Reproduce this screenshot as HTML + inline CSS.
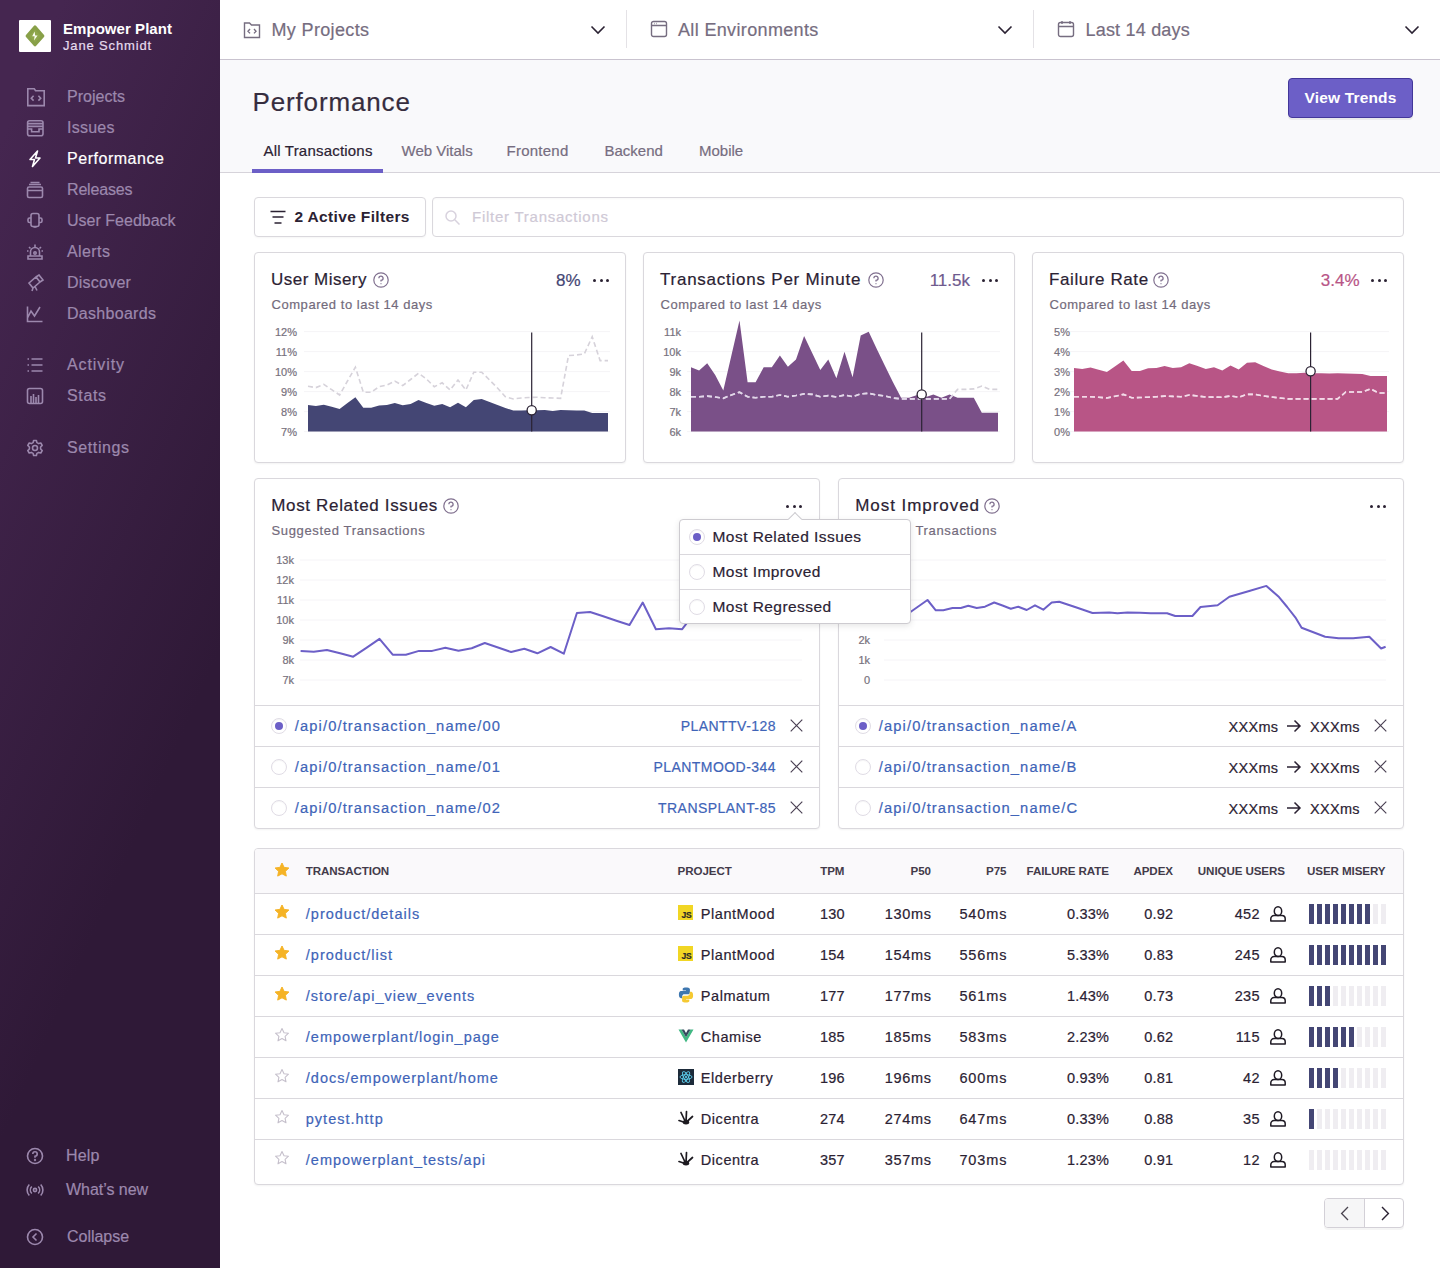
<!DOCTYPE html>
<html><head><meta charset="utf-8">
<style>
*{box-sizing:border-box;margin:0;padding:0}
html,body{width:1440px;height:1268px;overflow:hidden;background:#fff;font-family:"Liberation Sans",sans-serif;color:#2b2233}
.abs{position:absolute}
.t{position:absolute;white-space:nowrap;-webkit-text-stroke:0.2px currentColor}
#sb{position:absolute;left:0;top:0;width:220px;height:1268px;background:linear-gradient(294deg,#2f1937 35%,#452650 92%)}
.card{position:absolute;background:#fff;border:1px solid #dad8dd;border-radius:4px;box-shadow:0 1px 2px rgba(0,0,0,0.05)}
.dots{position:absolute;width:18px;height:4px}
.dots i{position:absolute;top:0;width:3px;height:3px;border-radius:50%;background:#2b2233}
</style></head><body>

<div id="sb"></div>
<div class="abs" style="left:19px;top:20px;width:32px;height:32px;background:#fff;border-radius:1px">
  <svg class="abs" style="left:0;top:0" width="32" height="32" viewBox="0 0 32 32"><path d="M16 7 L23.8 16 L16 24.8 L8.2 16 Z" fill="#8fa74c" stroke="#88a048" stroke-width="3.2" stroke-linejoin="round"/><path d="M15.6 11.6 L13.2 16.3 L15.6 16.3 L15 20.6 L18.6 15.6 L16.2 15.6 Z" fill="#fbfdf2"/></svg>
</div>
<div class="t" style="left:63px;top:20.50px;font-size:15px;line-height:15px;color:#fff;font-weight:bold;-webkit-text-stroke:0;letter-spacing:0.05px;">Empower Plant</div>
<div class="t" style="left:63px;top:38.80px;font-size:13px;line-height:13px;color:#e6dcee;letter-spacing:0.85px;">Jane Schmidt</div>
<svg class="abs" style="left:26px;top:88.0px" width="20" height="19" viewBox="0 0 20 19" fill="none" stroke="#9c88ad" stroke-width="1.6"><path d="M1.8 0.8 H8.2 L9.6 2.8 H18.2 V17.6 H1.8 Z"/><path d="M7.6 7.8 L5.3 10.2 L7.6 12.6 M12.4 7.8 L14.7 10.2 L12.4 12.6"/></svg>
<div class="t" style="left:67px;top:89.36px;font-size:16px;line-height:16px;color:#9c88ad;letter-spacing:0.03px;">Projects</div>
<svg class="abs" style="left:26px;top:118.5px" width="20" height="19" viewBox="0 0 20 19" fill="none" stroke="#9c88ad" stroke-width="1.6"><rect x="1.6" y="1.8" width="15.4" height="15" rx="2"/><path d="M1.6 4.6 H17 M1.6 7.4 H17 M1.6 10 H5.6 V12.8 H13 V10 H17"/></svg>
<div class="t" style="left:67px;top:119.86px;font-size:16px;line-height:16px;color:#9c88ad;letter-spacing:0.25px;">Issues</div>
<svg class="abs" style="left:26px;top:149.5px" width="20" height="19" viewBox="0 0 20 19" fill="none" stroke="#fff" stroke-width="1.6"><path d="M11.5 1 L4 9.5 H8.5 L6.5 16.5 L14 8 H9.5 Z" stroke-linejoin="round"/></svg>
<div class="t" style="left:67px;top:150.86px;font-size:16px;line-height:16px;color:#fff;letter-spacing:0.53px;">Performance</div>
<svg class="abs" style="left:26px;top:180.5px" width="20" height="19" viewBox="0 0 20 19" fill="none" stroke="#9c88ad" stroke-width="1.6"><rect x="1.5" y="6" width="15" height="10.5" rx="1.5"/><path d="M3 3.5 H15 M4.5 1.5 H13.5 M1.5 9.5 H16.5"/></svg>
<div class="t" style="left:67px;top:181.86px;font-size:16px;line-height:16px;color:#9c88ad;letter-spacing:-0.17px;">Releases</div>
<svg class="abs" style="left:26px;top:211.5px" width="20" height="19" viewBox="0 0 20 19" fill="none" stroke="#9c88ad" stroke-width="1.6"><rect x="5" y="1.5" width="8" height="13" rx="2"/><path d="M5 6 H3.5 A1.5 1.5 0 0 0 2 7.5 V9 A1.5 1.5 0 0 0 3.5 10.5 H5 M13 6 H14.5 A1.5 1.5 0 0 1 16 7.5 V9 A1.5 1.5 0 0 1 14.5 10.5 H13 M7.5 15 H10.5"/></svg>
<div class="t" style="left:67px;top:212.86px;font-size:16px;line-height:16px;color:#9c88ad;letter-spacing:0.01px;">User Feedback</div>
<svg class="abs" style="left:26px;top:242.5px" width="20" height="19" viewBox="0 0 20 19" fill="none" stroke="#9c88ad" stroke-width="1.6"><path d="M4.5 13 V9 A4.5 4.5 0 0 1 13.5 9 V13 M2 16 H16 V13 H2 Z M9 1.5 V4 M3 4 L4.5 5.5 M15 4 L13.5 5.5 M1 8 H2.5 M15.5 8 H17"/><circle cx="9" cy="10" r="1.2"/></svg>
<div class="t" style="left:67px;top:243.86px;font-size:16px;line-height:16px;color:#9c88ad;letter-spacing:0.4px;">Alerts</div>
<svg class="abs" style="left:26px;top:273.5px" width="20" height="19" viewBox="0 0 20 19" fill="none" stroke="#9c88ad" stroke-width="1.6"><path d="M3 9 L10 3 L14 8 L7 14 Z M10 3 L13 1 L17 6 L14 8 M7 14 L6 17 M9 12.5 L11 16.5"/></svg>
<div class="t" style="left:67px;top:274.86px;font-size:16px;line-height:16px;color:#9c88ad;letter-spacing:0.24px;">Discover</div>
<svg class="abs" style="left:26px;top:304.5px" width="20" height="19" viewBox="0 0 20 19" fill="none" stroke="#9c88ad" stroke-width="1.6"><path d="M1.5 1.5 V16.5 H16.5 M1.5 13 L5 6 L8.5 11 L14 2"/></svg>
<div class="t" style="left:67px;top:305.86px;font-size:16px;line-height:16px;color:#9c88ad;letter-spacing:0.29px;">Dashboards</div>
<svg class="abs" style="left:26px;top:356.0px" width="20" height="19" viewBox="0 0 20 19" fill="none" stroke="#9c88ad" stroke-width="1.6"><path d="M5.5 3 H16.5 M5.5 9 H16.5 M5.5 15 H16.5 M1.5 3 H3 M1.5 9 H3 M1.5 15 H3"/></svg>
<div class="t" style="left:67px;top:357.36px;font-size:16px;line-height:16px;color:#9c88ad;letter-spacing:0.9px;">Activity</div>
<svg class="abs" style="left:26px;top:387.0px" width="20" height="19" viewBox="0 0 20 19" fill="none" stroke="#9c88ad" stroke-width="1.6"><rect x="1.5" y="1.5" width="15" height="15" rx="2"/><path d="M5 16 V9 M7.5 16 V7 M10 16 V10 M12.5 16 V8"/></svg>
<div class="t" style="left:67px;top:388.36px;font-size:16px;line-height:16px;color:#9c88ad;letter-spacing:0.63px;">Stats</div>
<svg class="abs" style="left:26px;top:439.0px" width="20" height="19" viewBox="0 0 20 19" fill="none" stroke="#9c88ad" stroke-width="1.6"><circle cx="9" cy="9" r="2.5"/><path d="M7.6 1.5 H10.4 L10.9 3.6 L12.7 4.6 L14.8 4 L16.2 6.4 L14.6 8 V10 L16.2 11.6 L14.8 14 L12.7 13.4 L10.9 14.4 L10.4 16.5 H7.6 L7.1 14.4 L5.3 13.4 L3.2 14 L1.8 11.6 L3.4 10 V8 L1.8 6.4 L3.2 4 L5.3 4.6 L7.1 3.6 Z" stroke-linejoin="round"/></svg>
<div class="t" style="left:67px;top:440.36px;font-size:16px;line-height:16px;color:#9c88ad;letter-spacing:0.61px;">Settings</div>
<svg class="abs" style="left:26px;top:1147.0px" width="20" height="19" viewBox="0 0 20 19" fill="none" stroke="#9c88ad" stroke-width="1.6"><circle cx="9" cy="9" r="7.5"/><path d="M6.8 7 A2.2 2.2 0 1 1 9 9.2 V10.8"/><circle cx="9" cy="13" r="0.4"/></svg>
<div class="t" style="left:66px;top:1148.36px;font-size:16px;line-height:16px;color:#9c88ad;letter-spacing:0.16px;">Help</div>
<svg class="abs" style="left:26px;top:1181.0px" width="20" height="19" viewBox="0 0 20 19" fill="none" stroke="#9c88ad" stroke-width="1.6"><circle cx="9" cy="9" r="1.6"/><path d="M5.8 5.5 A5 5 0 0 0 5.8 12.5 M12.2 5.5 A5 5 0 0 1 12.2 12.5 M3.3 3.5 A8 8 0 0 0 3.3 14.5 M14.7 3.5 A8 8 0 0 1 14.7 14.5"/></svg>
<div class="t" style="left:66px;top:1182.36px;font-size:16px;line-height:16px;color:#9c88ad;letter-spacing:-0.03px;">What’s new</div>
<svg class="abs" style="left:26px;top:1228.0px" width="20" height="19" viewBox="0 0 20 19" fill="none" stroke="#9c88ad" stroke-width="1.6"><circle cx="9" cy="9" r="7.5"/><path d="M10.5 5.5 L7 9 L10.5 12.5"/></svg>
<div class="t" style="left:67px;top:1229.36px;font-size:16px;line-height:16px;color:#9c88ad;letter-spacing:-0.02px;">Collapse</div>
<div class="abs" style="left:220px;top:0;width:1220px;height:60px;background:#fff;border-bottom:1px solid #c9c3cf"></div>
<svg class="abs" style="left:243px;top:21px" width="18" height="18" viewBox="0 0 18 18" fill="none" stroke="#766d80" stroke-width="1.4"><path d="M1.5 2 H6.5 L8.5 4 H16.5 V16.5 H1.5 Z"/><path d="M7 8 L5 10.2 L7 12.4 M11 8 L13 10.2 L11 12.4"/></svg>
<div class="t" style="left:271.5px;top:20.66px;font-size:18px;line-height:18px;color:#766d80;letter-spacing:0.35px;">My Projects</div>
<svg class="abs" style="left:650px;top:20px" width="18" height="18" viewBox="0 0 18 18" fill="none" stroke="#766d80" stroke-width="1.4"><rect x="1.5" y="1.5" width="15" height="15" rx="2"/><path d="M1.5 5.5 H16.5 M4 3.5 H4.5 M6 3.5 H6.5"/></svg>
<div class="t" style="left:678px;top:20.66px;font-size:18px;line-height:18px;color:#766d80;letter-spacing:0.35px;">All Environments</div>
<svg class="abs" style="left:1057px;top:20px" width="18" height="18" viewBox="0 0 18 18" fill="none" stroke="#766d80" stroke-width="1.4"><rect x="1.5" y="2.5" width="15" height="14" rx="2"/><path d="M1.5 6.5 H16.5 M5 1 V4 M13 1 V4"/></svg>
<div class="t" style="left:1085.5px;top:20.66px;font-size:18px;line-height:18px;color:#766d80;letter-spacing:0.2px;">Last 14 days</div>
<svg class="abs" style="left:590px;top:22px" width="16" height="16" viewBox="0 0 16 16" fill="none" stroke="#2b2233" stroke-width="1.6"><path d="M1.5 4.5 L8 11 L14.5 4.5"/></svg>
<svg class="abs" style="left:997px;top:22px" width="16" height="16" viewBox="0 0 16 16" fill="none" stroke="#2b2233" stroke-width="1.6"><path d="M1.5 4.5 L8 11 L14.5 4.5"/></svg>
<svg class="abs" style="left:1404px;top:22px" width="16" height="16" viewBox="0 0 16 16" fill="none" stroke="#2b2233" stroke-width="1.6"><path d="M1.5 4.5 L8 11 L14.5 4.5"/></svg>
<div class="abs" style="left:626px;top:10px;width:1px;height:38px;background:#e4e2e6"></div>
<div class="abs" style="left:1033px;top:10px;width:1px;height:38px;background:#e4e2e6"></div>
<div class="abs" style="left:220px;top:60px;width:1220px;height:113px;background:#f9f9fb;border-bottom:1px solid #d6d3da"></div>
<div class="t" style="left:252.5px;top:88.59px;font-size:26px;line-height:26px;color:#362d3e;letter-spacing:0.85px;">Performance</div>
<div class="abs" style="left:1288px;top:78px;width:125px;height:40px;background:#6c5fc7;border:1px solid #43379a;border-radius:4px;box-shadow:0 2px 0 rgba(0,0,0,0.06)"></div>
<div class="t" style="left:1304.5px;top:90.08px;font-size:15.5px;line-height:15.5px;color:#fff;font-weight:bold;-webkit-text-stroke:0;letter-spacing:0.17px;">View Trends</div>
<div class="t" style="left:263.5px;top:142.90px;font-size:15px;line-height:15px;color:#2b2233;letter-spacing:0.2px;">All Transactions</div>
<div class="t" style="left:401.5px;top:142.90px;font-size:15px;line-height:15px;color:#766d80;letter-spacing:0.0px;">Web Vitals</div>
<div class="t" style="left:506.5px;top:142.90px;font-size:15px;line-height:15px;color:#766d80;letter-spacing:0.25px;">Frontend</div>
<div class="t" style="left:604.5px;top:142.90px;font-size:15px;line-height:15px;color:#766d80;letter-spacing:0.0px;">Backend</div>
<div class="t" style="left:699px;top:142.90px;font-size:15px;line-height:15px;color:#766d80;letter-spacing:0.0px;">Mobile</div>
<div class="abs" style="left:252px;top:169px;width:131px;height:4px;background:#6c5fc7"></div>
<div class="abs" style="left:254px;top:197px;width:172px;height:40px;border:1px solid #dad8dd;border-radius:4px;background:#fff;box-shadow:0 1px 2px rgba(0,0,0,0.04)"></div>
<svg class="abs" style="left:270px;top:209.5px" width="16" height="15" viewBox="0 0 16 15" fill="none" stroke="#2b2233" stroke-width="1.5"><path d="M0.5 1.5 H15.5 M2.5 7 H13.5 M4.5 13 H11.5"/></svg>
<div class="t" style="left:294.5px;top:208.58px;font-size:15.5px;line-height:15.5px;color:#2b2233;font-weight:bold;-webkit-text-stroke:0;letter-spacing:0.35px;">2 Active Filters</div>
<div class="abs" style="left:432px;top:197px;width:972px;height:40px;border:1px solid #dad8dd;border-radius:4px;background:#fff;box-shadow:inset 0 1px 2px rgba(0,0,0,0.03)"></div>
<svg class="abs" style="left:445px;top:210px" width="16" height="15" viewBox="0 0 16 15" fill="none" stroke="#d8d2de" stroke-width="1.5"><circle cx="6" cy="6" r="5"/><path d="M9.8 9.8 L14.5 14.5"/></svg>
<div class="t" style="left:472px;top:209.30px;font-size:15px;line-height:15px;color:#cfc9d6;letter-spacing:0.75px;">Filter Transactions</div>
<div class="card" style="left:254px;top:252px;width:372px;height:211px"></div>
<div class="t" style="left:271px;top:271.21px;font-size:17px;line-height:17px;color:#2b2233;letter-spacing:0.48px;">User Misery</div>
<svg class="abs" style="left:373px;top:272px" width="16" height="16" viewBox="0 0 16 16" fill="none" stroke="#80708f" stroke-width="1.2"><circle cx="8" cy="8" r="7.2"/><path d="M5.9 6.3 A2.1 2.1 0 1 1 8 8.4 V9.6" stroke-width="1.3"/><circle cx="8" cy="11.7" r="0.6" fill="#80708f" stroke="none"/></svg>
<div class="t" style="right:859.50px;top:271.61px;font-size:17px;line-height:17px;color:#444674;letter-spacing:0px;">8%</div>
<div class="dots" style="left:593px;top:278.5px"><i style="left:0"></i><i style="left:6.7px"></i><i style="left:13.4px"></i></div>
<div class="t" style="left:271.5px;top:298.40px;font-size:13px;line-height:13px;color:#736b7c;letter-spacing:0.55px;">Compared to last 14 days</div>
<div class="t" style="right:1143.00px;top:326.89px;font-size:11px;line-height:11px;color:#77717d;letter-spacing:0px;">12%</div>
<div class="t" style="right:1143.00px;top:346.89px;font-size:11px;line-height:11px;color:#77717d;letter-spacing:0px;">11%</div>
<div class="t" style="right:1143.00px;top:366.89px;font-size:11px;line-height:11px;color:#77717d;letter-spacing:0px;">10%</div>
<div class="t" style="right:1143.00px;top:386.89px;font-size:11px;line-height:11px;color:#77717d;letter-spacing:0px;">9%</div>
<div class="t" style="right:1143.00px;top:406.89px;font-size:11px;line-height:11px;color:#77717d;letter-spacing:0px;">8%</div>
<div class="t" style="right:1143.00px;top:426.89px;font-size:11px;line-height:11px;color:#77717d;letter-spacing:0px;">7%</div>
<div class="card" style="left:643px;top:252px;width:372px;height:211px"></div>
<div class="t" style="left:660px;top:271.21px;font-size:17px;line-height:17px;color:#2b2233;letter-spacing:0.76px;">Transactions Per Minute</div>
<svg class="abs" style="left:868px;top:272px" width="16" height="16" viewBox="0 0 16 16" fill="none" stroke="#80708f" stroke-width="1.2"><circle cx="8" cy="8" r="7.2"/><path d="M5.9 6.3 A2.1 2.1 0 1 1 8 8.4 V9.6" stroke-width="1.3"/><circle cx="8" cy="11.7" r="0.6" fill="#80708f" stroke="none"/></svg>
<div class="t" style="right:470.00px;top:271.61px;font-size:17px;line-height:17px;color:#6e5a8e;letter-spacing:0px;">11.5k</div>
<div class="dots" style="left:982px;top:278.5px"><i style="left:0"></i><i style="left:6.7px"></i><i style="left:13.4px"></i></div>
<div class="t" style="left:660.5px;top:298.40px;font-size:13px;line-height:13px;color:#736b7c;letter-spacing:0.55px;">Compared to last 14 days</div>
<div class="t" style="right:759.00px;top:326.89px;font-size:11px;line-height:11px;color:#77717d;letter-spacing:0px;">11k</div>
<div class="t" style="right:759.00px;top:346.89px;font-size:11px;line-height:11px;color:#77717d;letter-spacing:0px;">10k</div>
<div class="t" style="right:759.00px;top:366.89px;font-size:11px;line-height:11px;color:#77717d;letter-spacing:0px;">9k</div>
<div class="t" style="right:759.00px;top:386.89px;font-size:11px;line-height:11px;color:#77717d;letter-spacing:0px;">8k</div>
<div class="t" style="right:759.00px;top:406.89px;font-size:11px;line-height:11px;color:#77717d;letter-spacing:0px;">7k</div>
<div class="t" style="right:759.00px;top:426.89px;font-size:11px;line-height:11px;color:#77717d;letter-spacing:0px;">6k</div>
<div class="card" style="left:1032px;top:252px;width:372px;height:211px"></div>
<div class="t" style="left:1049px;top:271.21px;font-size:17px;line-height:17px;color:#2b2233;letter-spacing:0.59px;">Failure Rate</div>
<svg class="abs" style="left:1153px;top:272px" width="16" height="16" viewBox="0 0 16 16" fill="none" stroke="#80708f" stroke-width="1.2"><circle cx="8" cy="8" r="7.2"/><path d="M5.9 6.3 A2.1 2.1 0 1 1 8 8.4 V9.6" stroke-width="1.3"/><circle cx="8" cy="11.7" r="0.6" fill="#80708f" stroke="none"/></svg>
<div class="t" style="right:80.50px;top:271.61px;font-size:17px;line-height:17px;color:#b85586;letter-spacing:0px;">3.4%</div>
<div class="dots" style="left:1371px;top:278.5px"><i style="left:0"></i><i style="left:6.7px"></i><i style="left:13.4px"></i></div>
<div class="t" style="left:1049.5px;top:298.40px;font-size:13px;line-height:13px;color:#736b7c;letter-spacing:0.55px;">Compared to last 14 days</div>
<div class="t" style="right:370.00px;top:326.89px;font-size:11px;line-height:11px;color:#77717d;letter-spacing:0px;">5%</div>
<div class="t" style="right:370.00px;top:346.89px;font-size:11px;line-height:11px;color:#77717d;letter-spacing:0px;">4%</div>
<div class="t" style="right:370.00px;top:366.89px;font-size:11px;line-height:11px;color:#77717d;letter-spacing:0px;">3%</div>
<div class="t" style="right:370.00px;top:386.89px;font-size:11px;line-height:11px;color:#77717d;letter-spacing:0px;">2%</div>
<div class="t" style="right:370.00px;top:406.89px;font-size:11px;line-height:11px;color:#77717d;letter-spacing:0px;">1%</div>
<div class="t" style="right:370.00px;top:426.89px;font-size:11px;line-height:11px;color:#77717d;letter-spacing:0px;">0%</div>
<div class="card" style="left:254px;top:478px;width:566px;height:351px"></div>
<div class="t" style="left:271.2px;top:497.41px;font-size:17px;line-height:17px;color:#2b2233;letter-spacing:0.67px;">Most Related Issues</div>
<svg class="abs" style="left:443px;top:498px" width="16" height="16" viewBox="0 0 16 16" fill="none" stroke="#80708f" stroke-width="1.2"><circle cx="8" cy="8" r="7.2"/><path d="M5.9 6.3 A2.1 2.1 0 1 1 8 8.4 V9.6" stroke-width="1.3"/><circle cx="8" cy="11.7" r="0.6" fill="#80708f" stroke="none"/></svg>
<div class="dots" style="left:786px;top:504.5px"><i style="left:0"></i><i style="left:6.7px"></i><i style="left:13.4px"></i></div>
<div class="t" style="left:271.5px;top:523.70px;font-size:13px;line-height:13px;color:#736b7c;letter-spacing:0.65px;">Suggested Transactions</div>
<div class="t" style="right:1146.00px;top:555.29px;font-size:11px;line-height:11px;color:#77717d;letter-spacing:0px;">13k</div>
<div class="t" style="right:1146.00px;top:575.29px;font-size:11px;line-height:11px;color:#77717d;letter-spacing:0px;">12k</div>
<div class="t" style="right:1146.00px;top:595.29px;font-size:11px;line-height:11px;color:#77717d;letter-spacing:0px;">11k</div>
<div class="t" style="right:1146.00px;top:615.29px;font-size:11px;line-height:11px;color:#77717d;letter-spacing:0px;">10k</div>
<div class="t" style="right:1146.00px;top:635.29px;font-size:11px;line-height:11px;color:#77717d;letter-spacing:0px;">9k</div>
<div class="t" style="right:1146.00px;top:655.29px;font-size:11px;line-height:11px;color:#77717d;letter-spacing:0px;">8k</div>
<div class="t" style="right:1146.00px;top:675.29px;font-size:11px;line-height:11px;color:#77717d;letter-spacing:0px;">7k</div>
<div class="abs" style="left:254px;top:705.0px;width:566px;height:1px;background:#dad8dd"></div>
<div class="abs" style="left:271px;top:717.5px;width:16px;height:16px;border-radius:50%;border:1px solid #e0dce5;background:#fff;box-shadow:inset 0 1px 1px rgba(0,0,0,0.04)"><div class="abs" style="left:3px;top:3px;width:8px;height:8px;border-radius:50%;background:#6c5fc7"></div></div>
<div class="t" style="left:294.8px;top:718.86px;font-size:14.7px;line-height:14.7px;color:#4064b8;letter-spacing:1.12px;">/api/0/transaction_name/00</div>
<div class="t" style="right:664.05px;top:718.95px;font-size:14px;line-height:14px;color:#4064b8;letter-spacing:0.45px;">PLANTTV-128</div>
<svg class="abs" style="left:790px;top:718.5px" width="13" height="13" viewBox="0 0 13 13" fill="none" stroke="#4a4053" stroke-width="1.15"><path d="M0.7 0.7 L12.3 12.3 M12.3 0.7 L0.7 12.3"/></svg>
<div class="abs" style="left:254px;top:746.0px;width:566px;height:1px;background:#dad8dd"></div>
<div class="abs" style="left:271px;top:758.5px;width:16px;height:16px;border-radius:50%;border:1px solid #e0dce5;background:#fff;box-shadow:inset 0 1px 1px rgba(0,0,0,0.04)"></div>
<div class="t" style="left:294.8px;top:759.86px;font-size:14.7px;line-height:14.7px;color:#4064b8;letter-spacing:1.12px;">/api/0/transaction_name/01</div>
<div class="t" style="right:664.05px;top:759.95px;font-size:14px;line-height:14px;color:#4064b8;letter-spacing:0.45px;">PLANTMOOD-344</div>
<svg class="abs" style="left:790px;top:759.5px" width="13" height="13" viewBox="0 0 13 13" fill="none" stroke="#4a4053" stroke-width="1.15"><path d="M0.7 0.7 L12.3 12.3 M12.3 0.7 L0.7 12.3"/></svg>
<div class="abs" style="left:254px;top:787.0px;width:566px;height:1px;background:#dad8dd"></div>
<div class="abs" style="left:271px;top:799.5px;width:16px;height:16px;border-radius:50%;border:1px solid #e0dce5;background:#fff;box-shadow:inset 0 1px 1px rgba(0,0,0,0.04)"></div>
<div class="t" style="left:294.8px;top:800.86px;font-size:14.7px;line-height:14.7px;color:#4064b8;letter-spacing:1.12px;">/api/0/transaction_name/02</div>
<div class="t" style="right:664.05px;top:800.95px;font-size:14px;line-height:14px;color:#4064b8;letter-spacing:0.45px;">TRANSPLANT-85</div>
<svg class="abs" style="left:790px;top:800.5px" width="13" height="13" viewBox="0 0 13 13" fill="none" stroke="#4a4053" stroke-width="1.15"><path d="M0.7 0.7 L12.3 12.3 M12.3 0.7 L0.7 12.3"/></svg>
<div class="card" style="left:838px;top:478px;width:566px;height:351px"></div>
<div class="t" style="left:855.2px;top:497.41px;font-size:17px;line-height:17px;color:#2b2233;letter-spacing:0.95px;">Most Improved</div>
<svg class="abs" style="left:984px;top:498px" width="16" height="16" viewBox="0 0 16 16" fill="none" stroke="#80708f" stroke-width="1.2"><circle cx="8" cy="8" r="7.2"/><path d="M5.9 6.3 A2.1 2.1 0 1 1 8 8.4 V9.6" stroke-width="1.3"/><circle cx="8" cy="11.7" r="0.6" fill="#80708f" stroke="none"/></svg>
<div class="dots" style="left:1370px;top:504.5px"><i style="left:0"></i><i style="left:6.7px"></i><i style="left:13.4px"></i></div>
<div class="t" style="left:915.5px;top:523.70px;font-size:13px;line-height:13px;color:#736b7c;letter-spacing:0.65px;">Transactions</div>
<div class="t" style="right:570.00px;top:555.29px;font-size:11px;line-height:11px;color:#77717d;letter-spacing:0px;">6k</div>
<div class="t" style="right:570.00px;top:575.29px;font-size:11px;line-height:11px;color:#77717d;letter-spacing:0px;">5k</div>
<div class="t" style="right:570.00px;top:595.29px;font-size:11px;line-height:11px;color:#77717d;letter-spacing:0px;">4k</div>
<div class="t" style="right:570.00px;top:615.29px;font-size:11px;line-height:11px;color:#77717d;letter-spacing:0px;">3k</div>
<div class="t" style="right:570.00px;top:635.29px;font-size:11px;line-height:11px;color:#77717d;letter-spacing:0px;">2k</div>
<div class="t" style="right:570.00px;top:655.29px;font-size:11px;line-height:11px;color:#77717d;letter-spacing:0px;">1k</div>
<div class="t" style="right:570.00px;top:675.29px;font-size:11px;line-height:11px;color:#77717d;letter-spacing:0px;">0</div>
<div class="abs" style="left:838px;top:705.0px;width:566px;height:1px;background:#dad8dd"></div>
<div class="abs" style="left:855px;top:717.5px;width:16px;height:16px;border-radius:50%;border:1px solid #e0dce5;background:#fff;box-shadow:inset 0 1px 1px rgba(0,0,0,0.04)"><div class="abs" style="left:3px;top:3px;width:8px;height:8px;border-radius:50%;background:#6c5fc7"></div></div>
<div class="t" style="left:878.8px;top:718.86px;font-size:14.7px;line-height:14.7px;color:#4064b8;letter-spacing:1.12px;">/api/0/transaction_name/A</div>
<div class="t" style="right:80.20px;top:719.23px;font-size:14.5px;line-height:14.5px;color:#2b2233;letter-spacing:0.3px;">XXXms <svg width="16" height="14" viewBox="0 0 16 14" style="margin:0 4px 0 3px;vertical-align:-1px" fill="none" stroke="#2b2233" stroke-width="1.5"><path d="M1 7 H14 M8.5 1.5 L14 7 L8.5 12.5"/></svg> XXXms</div>
<svg class="abs" style="left:1374px;top:718.5px" width="13" height="13" viewBox="0 0 13 13" fill="none" stroke="#4a4053" stroke-width="1.15"><path d="M0.7 0.7 L12.3 12.3 M12.3 0.7 L0.7 12.3"/></svg>
<div class="abs" style="left:838px;top:746.0px;width:566px;height:1px;background:#dad8dd"></div>
<div class="abs" style="left:855px;top:758.5px;width:16px;height:16px;border-radius:50%;border:1px solid #e0dce5;background:#fff;box-shadow:inset 0 1px 1px rgba(0,0,0,0.04)"></div>
<div class="t" style="left:878.8px;top:759.86px;font-size:14.7px;line-height:14.7px;color:#4064b8;letter-spacing:1.12px;">/api/0/transaction_name/B</div>
<div class="t" style="right:80.20px;top:760.23px;font-size:14.5px;line-height:14.5px;color:#2b2233;letter-spacing:0.3px;">XXXms <svg width="16" height="14" viewBox="0 0 16 14" style="margin:0 4px 0 3px;vertical-align:-1px" fill="none" stroke="#2b2233" stroke-width="1.5"><path d="M1 7 H14 M8.5 1.5 L14 7 L8.5 12.5"/></svg> XXXms</div>
<svg class="abs" style="left:1374px;top:759.5px" width="13" height="13" viewBox="0 0 13 13" fill="none" stroke="#4a4053" stroke-width="1.15"><path d="M0.7 0.7 L12.3 12.3 M12.3 0.7 L0.7 12.3"/></svg>
<div class="abs" style="left:838px;top:787.0px;width:566px;height:1px;background:#dad8dd"></div>
<div class="abs" style="left:855px;top:799.5px;width:16px;height:16px;border-radius:50%;border:1px solid #e0dce5;background:#fff;box-shadow:inset 0 1px 1px rgba(0,0,0,0.04)"></div>
<div class="t" style="left:878.8px;top:800.86px;font-size:14.7px;line-height:14.7px;color:#4064b8;letter-spacing:1.12px;">/api/0/transaction_name/C</div>
<div class="t" style="right:80.20px;top:801.23px;font-size:14.5px;line-height:14.5px;color:#2b2233;letter-spacing:0.3px;">XXXms <svg width="16" height="14" viewBox="0 0 16 14" style="margin:0 4px 0 3px;vertical-align:-1px" fill="none" stroke="#2b2233" stroke-width="1.5"><path d="M1 7 H14 M8.5 1.5 L14 7 L8.5 12.5"/></svg> XXXms</div>
<svg class="abs" style="left:1374px;top:800.5px" width="13" height="13" viewBox="0 0 13 13" fill="none" stroke="#4a4053" stroke-width="1.15"><path d="M0.7 0.7 L12.3 12.3 M12.3 0.7 L0.7 12.3"/></svg>
<svg class="abs" style="left:0;top:0" width="1440" height="1268" viewBox="0 0 1440 1268"><line x1="304" y1="331.6" x2="610" y2="331.6" stroke="#f5f4f7" stroke-width="1"/>
<line x1="304" y1="351.6" x2="610" y2="351.6" stroke="#f5f4f7" stroke-width="1"/>
<line x1="304" y1="371.6" x2="610" y2="371.6" stroke="#f5f4f7" stroke-width="1"/>
<line x1="304" y1="391.6" x2="610" y2="391.6" stroke="#f5f4f7" stroke-width="1"/>
<line x1="304" y1="411.6" x2="610" y2="411.6" stroke="#f5f4f7" stroke-width="1"/>
<line x1="304" y1="431.6" x2="610" y2="431.6" stroke="#f5f4f7" stroke-width="1"/>
<polygon points="308.0,431.6 308.0,405.0 315.9,406.0 323.8,404.7 331.7,406.8 339.6,408.9 347.5,403.0 355.4,397.2 363.3,407.8 371.2,407.8 379.1,405.5 386.9,405.0 394.8,403.0 402.7,405.3 410.6,403.9 418.5,400.0 426.4,403.0 434.3,405.8 442.2,403.9 450.1,407.2 458.0,402.8 465.9,407.2 473.8,400.0 481.7,399.1 489.6,402.0 497.5,405.0 505.4,408.0 513.3,410.6 521.2,410.6 529.1,410.3 536.9,410.2 544.8,410.0 552.7,410.9 560.6,410.0 568.5,410.2 576.4,410.4 584.3,410.6 592.2,413.0 600.1,413.0 608.0,413.0 608.0,431.6" fill="#444674"/>
<clipPath id="clip308"><polygon points="308.0,431.6 308.0,405.0 315.9,406.0 323.8,404.7 331.7,406.8 339.6,408.9 347.5,403.0 355.4,397.2 363.3,407.8 371.2,407.8 379.1,405.5 386.9,405.0 394.8,403.0 402.7,405.3 410.6,403.9 418.5,400.0 426.4,403.0 434.3,405.8 442.2,403.9 450.1,407.2 458.0,402.8 465.9,407.2 473.8,400.0 481.7,399.1 489.6,402.0 497.5,405.0 505.4,408.0 513.3,410.6 521.2,410.6 529.1,410.3 536.9,410.2 544.8,410.0 552.7,410.9 560.6,410.0 568.5,410.2 576.4,410.4 584.3,410.6 592.2,413.0 600.1,413.0 608.0,413.0 608.0,431.6"/></clipPath>
<polyline points="308.0,386.3 315.9,387.6 323.8,384.4 331.7,389.7 339.6,395.0 347.5,381.0 355.4,367.2 363.3,392.2 371.2,392.2 379.1,386.7 386.9,385.0 394.8,381.1 402.7,385.6 410.6,379.5 418.5,373.3 426.4,378.9 434.3,386.7 442.2,382.8 450.1,390.0 458.0,380.0 465.9,390.0 473.8,372.2 481.7,372.2 489.6,380.0 497.5,388.0 505.4,396.7 513.3,398.9 521.2,398.0 529.1,397.5 536.9,397.2 544.8,397.8 552.7,398.0 560.6,398.3 568.5,355.6 576.4,355.0 584.3,353.9 592.2,336.7 600.1,360.6 608.0,360.6" fill="none" stroke="#d6d2da" stroke-width="1.6" stroke-dasharray="5,3"/>
<polyline points="308.0,386.3 315.9,387.6 323.8,384.4 331.7,389.7 339.6,395.0 347.5,381.0 355.4,367.2 363.3,392.2 371.2,392.2 379.1,386.7 386.9,385.0 394.8,381.1 402.7,385.6 410.6,379.5 418.5,373.3 426.4,378.9 434.3,386.7 442.2,382.8 450.1,390.0 458.0,380.0 465.9,390.0 473.8,372.2 481.7,372.2 489.6,380.0 497.5,388.0 505.4,396.7 513.3,398.9 521.2,398.0 529.1,397.5 536.9,397.2 544.8,397.8 552.7,398.0 560.6,398.3 568.5,355.6 576.4,355.0 584.3,353.9 592.2,336.7 600.1,360.6 608.0,360.6" fill="none" stroke="#d9d5dd" stroke-width="1.6" stroke-dasharray="5,3" clip-path="url(#clip308)"/>
<line x1="531.7" y1="332.6" x2="531.7" y2="431.6" stroke="#2b2233" stroke-width="1.2"/>
<circle cx="531.7" cy="410.3" r="4.6" fill="#fff" stroke="#2b2233" stroke-width="1.3"/>
<line x1="687" y1="331.6" x2="1000" y2="331.6" stroke="#f5f4f7" stroke-width="1"/>
<line x1="687" y1="351.6" x2="1000" y2="351.6" stroke="#f5f4f7" stroke-width="1"/>
<line x1="687" y1="371.6" x2="1000" y2="371.6" stroke="#f5f4f7" stroke-width="1"/>
<line x1="687" y1="391.6" x2="1000" y2="391.6" stroke="#f5f4f7" stroke-width="1"/>
<line x1="687" y1="411.6" x2="1000" y2="411.6" stroke="#f5f4f7" stroke-width="1"/>
<line x1="687" y1="431.6" x2="1000" y2="431.6" stroke="#f5f4f7" stroke-width="1"/>
<polygon points="691.0,431.6 691.0,367.2 699.1,370.6 707.2,363.3 715.2,375.0 723.3,390.6 731.4,355.6 739.5,320.6 747.6,382.2 755.6,382.2 763.7,367.2 771.8,367.2 779.9,355.6 787.9,366.7 796.0,359.4 804.1,336.1 812.2,353.0 820.3,370.0 828.3,359.4 836.4,378.3 844.5,351.7 852.6,377.2 860.7,335.6 868.7,331.7 876.8,349.1 884.9,365.7 893.0,382.3 901.1,397.8 909.1,397.8 917.2,395.0 925.3,397.2 933.4,394.4 941.4,397.8 949.5,394.4 957.6,397.8 965.7,397.8 973.8,397.8 981.8,412.8 989.9,412.8 998.0,412.8 998.0,431.6" fill="#7a5088"/>
<clipPath id="clip691"><polygon points="691.0,431.6 691.0,367.2 699.1,370.6 707.2,363.3 715.2,375.0 723.3,390.6 731.4,355.6 739.5,320.6 747.6,382.2 755.6,382.2 763.7,367.2 771.8,367.2 779.9,355.6 787.9,366.7 796.0,359.4 804.1,336.1 812.2,353.0 820.3,370.0 828.3,359.4 836.4,378.3 844.5,351.7 852.6,377.2 860.7,335.6 868.7,331.7 876.8,349.1 884.9,365.7 893.0,382.3 901.1,397.8 909.1,397.8 917.2,395.0 925.3,397.2 933.4,394.4 941.4,397.8 949.5,394.4 957.6,397.8 965.7,397.8 973.8,397.8 981.8,412.8 989.9,412.8 998.0,412.8 998.0,431.6"/></clipPath>
<polyline points="691.0,396.7 699.1,396.7 707.2,396.1 715.2,397.0 723.3,398.3 731.4,395.0 739.5,392.2 747.6,396.7 755.6,397.8 763.7,396.7 771.8,396.7 779.9,395.0 787.9,396.7 796.0,395.5 804.1,393.9 812.2,394.4 820.3,396.7 828.3,395.6 836.4,397.0 844.5,395.0 852.6,396.7 860.7,393.9 868.7,393.3 876.8,395.0 884.9,396.0 893.0,398.0 901.1,398.9 909.1,398.9 917.2,398.9 925.3,398.9 933.4,398.9 941.4,398.9 949.5,398.9 957.6,389.4 965.7,389.4 973.8,388.9 981.8,386.1 989.9,389.4 998.0,389.4" fill="none" stroke="#d6d2da" stroke-width="1.6" stroke-dasharray="5,3"/>
<polyline points="691.0,396.7 699.1,396.7 707.2,396.1 715.2,397.0 723.3,398.3 731.4,395.0 739.5,392.2 747.6,396.7 755.6,397.8 763.7,396.7 771.8,396.7 779.9,395.0 787.9,396.7 796.0,395.5 804.1,393.9 812.2,394.4 820.3,396.7 828.3,395.6 836.4,397.0 844.5,395.0 852.6,396.7 860.7,393.9 868.7,393.3 876.8,395.0 884.9,396.0 893.0,398.0 901.1,398.9 909.1,398.9 917.2,398.9 925.3,398.9 933.4,398.9 941.4,398.9 949.5,398.9 957.6,389.4 965.7,389.4 973.8,388.9 981.8,386.1 989.9,389.4 998.0,389.4" fill="none" stroke="#e2d6ea" stroke-width="1.6" stroke-dasharray="5,3" clip-path="url(#clip691)"/>
<line x1="921.7" y1="332.6" x2="921.7" y2="431.6" stroke="#2b2233" stroke-width="1.2"/>
<circle cx="921.7" cy="394.4" r="4.6" fill="#fff" stroke="#2b2233" stroke-width="1.3"/>
<line x1="1070" y1="331.6" x2="1389" y2="331.6" stroke="#f5f4f7" stroke-width="1"/>
<line x1="1070" y1="351.6" x2="1389" y2="351.6" stroke="#f5f4f7" stroke-width="1"/>
<line x1="1070" y1="371.6" x2="1389" y2="371.6" stroke="#f5f4f7" stroke-width="1"/>
<line x1="1070" y1="391.6" x2="1389" y2="391.6" stroke="#f5f4f7" stroke-width="1"/>
<line x1="1070" y1="411.6" x2="1389" y2="411.6" stroke="#f5f4f7" stroke-width="1"/>
<line x1="1070" y1="431.6" x2="1389" y2="431.6" stroke="#f5f4f7" stroke-width="1"/>
<polygon points="1074.0,431.6 1074.0,368.0 1082.2,368.9 1090.5,367.6 1098.7,369.8 1106.9,372.0 1115.2,366.3 1123.4,360.6 1131.7,371.1 1139.9,371.0 1148.1,368.3 1156.4,368.0 1164.6,366.1 1172.8,368.0 1181.1,367.2 1189.3,363.3 1197.6,366.1 1205.8,368.9 1214.0,367.2 1222.3,370.6 1230.5,365.6 1238.7,369.4 1247.0,362.8 1255.2,362.2 1263.4,366.0 1271.7,369.5 1279.9,371.5 1288.2,373.3 1296.4,373.3 1304.6,372.8 1312.9,373.3 1321.1,373.3 1329.3,373.6 1337.6,373.3 1345.8,373.5 1354.1,373.7 1362.3,373.9 1370.5,376.1 1378.8,376.1 1387.0,376.1 1387.0,431.6" fill="#b85586"/>
<clipPath id="clip1074"><polygon points="1074.0,431.6 1074.0,368.0 1082.2,368.9 1090.5,367.6 1098.7,369.8 1106.9,372.0 1115.2,366.3 1123.4,360.6 1131.7,371.1 1139.9,371.0 1148.1,368.3 1156.4,368.0 1164.6,366.1 1172.8,368.0 1181.1,367.2 1189.3,363.3 1197.6,366.1 1205.8,368.9 1214.0,367.2 1222.3,370.6 1230.5,365.6 1238.7,369.4 1247.0,362.8 1255.2,362.2 1263.4,366.0 1271.7,369.5 1279.9,371.5 1288.2,373.3 1296.4,373.3 1304.6,372.8 1312.9,373.3 1321.1,373.3 1329.3,373.6 1337.6,373.3 1345.8,373.5 1354.1,373.7 1362.3,373.9 1370.5,376.1 1378.8,376.1 1387.0,376.1 1387.0,431.6"/></clipPath>
<polyline points="1074.0,396.7 1082.2,396.7 1090.5,396.7 1098.7,397.3 1106.9,398.0 1115.2,396.2 1123.4,394.4 1131.7,397.8 1139.9,397.5 1148.1,397.2 1156.4,396.7 1164.6,396.1 1172.8,396.4 1181.1,396.7 1189.3,395.0 1197.6,396.0 1205.8,397.0 1214.0,397.1 1222.3,397.2 1230.5,396.0 1238.7,397.2 1247.0,394.4 1255.2,394.4 1263.4,396.0 1271.7,397.0 1279.9,398.0 1288.2,398.9 1296.4,398.9 1304.6,398.9 1312.9,398.9 1321.1,398.9 1329.3,398.9 1337.6,398.9 1345.8,392.0 1354.1,392.0 1362.3,392.0 1370.5,388.9 1378.8,393.0 1387.0,393.0" fill="none" stroke="#d6d2da" stroke-width="1.6" stroke-dasharray="5,3"/>
<polyline points="1074.0,396.7 1082.2,396.7 1090.5,396.7 1098.7,397.3 1106.9,398.0 1115.2,396.2 1123.4,394.4 1131.7,397.8 1139.9,397.5 1148.1,397.2 1156.4,396.7 1164.6,396.1 1172.8,396.4 1181.1,396.7 1189.3,395.0 1197.6,396.0 1205.8,397.0 1214.0,397.1 1222.3,397.2 1230.5,396.0 1238.7,397.2 1247.0,394.4 1255.2,394.4 1263.4,396.0 1271.7,397.0 1279.9,398.0 1288.2,398.9 1296.4,398.9 1304.6,398.9 1312.9,398.9 1321.1,398.9 1329.3,398.9 1337.6,398.9 1345.8,392.0 1354.1,392.0 1362.3,392.0 1370.5,388.9 1378.8,393.0 1387.0,393.0" fill="none" stroke="#f6d9e8" stroke-width="1.6" stroke-dasharray="5,3" clip-path="url(#clip1074)"/>
<line x1="1310.6" y1="332.6" x2="1310.6" y2="431.6" stroke="#2b2233" stroke-width="1.2"/>
<circle cx="1310.6" cy="371.3" r="4.6" fill="#fff" stroke="#2b2233" stroke-width="1.3"/>
<line x1="300" y1="560" x2="802" y2="560" stroke="#f5f4f7" stroke-width="1"/>
<line x1="300" y1="580" x2="802" y2="580" stroke="#f5f4f7" stroke-width="1"/>
<line x1="300" y1="600" x2="802" y2="600" stroke="#f5f4f7" stroke-width="1"/>
<line x1="300" y1="620" x2="802" y2="620" stroke="#f5f4f7" stroke-width="1"/>
<line x1="300" y1="640" x2="802" y2="640" stroke="#f5f4f7" stroke-width="1"/>
<line x1="300" y1="660" x2="802" y2="660" stroke="#f5f4f7" stroke-width="1"/>
<line x1="300" y1="680" x2="802" y2="680" stroke="#f5f4f7" stroke-width="1"/>
<line x1="884" y1="560" x2="1386" y2="560" stroke="#f5f4f7" stroke-width="1"/>
<line x1="884" y1="580" x2="1386" y2="580" stroke="#f5f4f7" stroke-width="1"/>
<line x1="884" y1="600" x2="1386" y2="600" stroke="#f5f4f7" stroke-width="1"/>
<line x1="884" y1="620" x2="1386" y2="620" stroke="#f5f4f7" stroke-width="1"/>
<line x1="884" y1="640" x2="1386" y2="640" stroke="#f5f4f7" stroke-width="1"/>
<line x1="884" y1="660" x2="1386" y2="660" stroke="#f5f4f7" stroke-width="1"/>
<line x1="884" y1="680" x2="1386" y2="680" stroke="#f5f4f7" stroke-width="1"/>
<polyline points="300.6,650.9 313.8,651.7 326.9,650.0 340.1,653.3 353.2,656.7 366.4,647.8 379.5,638.9 392.7,654.7 405.9,654.7 419.0,650.9 432.2,650.9 445.3,647.8 458.5,650.8 471.7,648.3 484.8,643.0 498.0,647.5 511.1,652.0 524.3,648.7 537.4,653.3 550.6,647.0 563.8,653.7 576.9,613.0 590.1,612.0 603.2,616.3 616.4,620.7 629.5,625.0 642.7,602.5 655.9,629.2 669.0,628.3 682.2,629.2 695.3,612.0 708.5,608.0 721.7,610.0 734.8,604.0 748.0,606.0 761.1,600.0 774.3,603.0 787.4,598.0 800.6,601.0" fill="none" stroke="#6c5fc7" stroke-width="2" stroke-linejoin="round"/>
<polyline points="880,606 888,604 896,608 904,614 910.8,611.7 927.5,600 935.8,610.3 943.3,610.3 952.5,608 960.8,608 968.3,605.8 976.7,608 985,606.7 994.2,602.5 1002.5,605.5 1010.8,608.7 1018.3,606.7 1026.7,610 1035,605.3 1043.3,609.7 1051.7,602.5 1059.2,601.7 1075.8,607.3 1092.5,613 1109.2,612.5 1117.5,613.3 1127.5,612.5 1140,612.8 1150.8,613.3 1167.1,613.3 1175.2,616 1192.4,616 1200.5,607 1217.6,605.2 1229.4,596.7 1250.1,590.8 1266.4,585.9 1279,597.1 1287.2,607 1295.3,617.3 1301.6,627.8 1325.1,636.8 1338.6,638.3 1353.1,638.3 1369.3,636.8 1381.1,648.5 1385.6,646.7" fill="none" stroke="#6c5fc7" stroke-width="2" stroke-linejoin="round"/></svg>
<div class="abs" style="left:679px;top:519px;width:232px;height:105px;background:#fff;border:1px solid #cdcbd0;border-radius:4px;box-shadow:0 2px 6px rgba(0,0,0,0.10)">
  <div class="abs" style="left:110px;top:-6px;width:10px;height:10px;background:#fff;border-left:1px solid #cdcbd0;border-top:1px solid #cdcbd0;transform:rotate(45deg)"></div>
  <div class="abs" style="left:0;top:34px;width:230px;height:1px;background:#dad8dd"></div>
  <div class="abs" style="left:0;top:69px;width:230px;height:1px;background:#dad8dd"></div>
</div>
<div class="abs" style="left:689px;top:528.5px;width:16px;height:16px;border-radius:50%;border:1px solid #e0dce5;background:#fff;box-shadow:inset 0 1px 1px rgba(0,0,0,0.04)"><div class="abs" style="left:3px;top:3px;width:8px;height:8px;border-radius:50%;background:#6c5fc7"></div></div>
<div class="t" style="left:712.5px;top:528.88px;font-size:15.5px;line-height:15.5px;color:#2b2233;letter-spacing:0.45px;">Most Related Issues</div>
<div class="abs" style="left:689px;top:563.5px;width:16px;height:16px;border-radius:50%;border:1px solid #e0dce5;background:#fff;box-shadow:inset 0 1px 1px rgba(0,0,0,0.04)"></div>
<div class="t" style="left:712.5px;top:563.88px;font-size:15.5px;line-height:15.5px;color:#2b2233;letter-spacing:0.45px;">Most Improved</div>
<div class="abs" style="left:689px;top:598.5px;width:16px;height:16px;border-radius:50%;border:1px solid #e0dce5;background:#fff;box-shadow:inset 0 1px 1px rgba(0,0,0,0.04)"></div>
<div class="t" style="left:712.5px;top:598.88px;font-size:15.5px;line-height:15.5px;color:#2b2233;letter-spacing:0.45px;">Most Regressed</div>
<div class="card" style="left:254px;top:848px;width:1150px;height:337px;overflow:hidden"><div class="abs" style="left:0;top:0;width:1150px;height:45px;background:#faf9fb;border-bottom:1px solid #dad8dd"></div></div>
<svg class="abs" style="left:274px;top:862px" width="16" height="16" viewBox="0 0 16 16"><path d="M8 1 L10.1 5.4 L14.9 6 L11.4 9.3 L12.3 14.1 L8 11.8 L3.7 14.1 L4.6 9.3 L1.1 6 L5.9 5.4 Z" fill="#f5b325" stroke="#f5b325" stroke-width="1" stroke-linejoin="round"/></svg>
<div class="t" style="left:305.8px;top:865.28px;font-size:11.6px;line-height:11.6px;color:#433b4a;font-weight:bold;-webkit-text-stroke:0;letter-spacing:-0.1px;">TRANSACTION</div>
<div class="t" style="left:677.6px;top:865.28px;font-size:11.6px;line-height:11.6px;color:#433b4a;font-weight:bold;-webkit-text-stroke:0;letter-spacing:-0.1px;">PROJECT</div>
<div class="t" style="right:595.60px;top:865.28px;font-size:11.6px;line-height:11.6px;color:#433b4a;font-weight:bold;-webkit-text-stroke:0;letter-spacing:-0.1px;">TPM</div>
<div class="t" style="right:509.10px;top:865.28px;font-size:11.6px;line-height:11.6px;color:#433b4a;font-weight:bold;-webkit-text-stroke:0;letter-spacing:-0.1px;">P50</div>
<div class="t" style="right:433.60px;top:865.28px;font-size:11.6px;line-height:11.6px;color:#433b4a;font-weight:bold;-webkit-text-stroke:0;letter-spacing:-0.1px;">P75</div>
<div class="t" style="right:331.10px;top:865.28px;font-size:11.6px;line-height:11.6px;color:#433b4a;font-weight:bold;-webkit-text-stroke:0;letter-spacing:-0.1px;">FAILURE RATE</div>
<div class="t" style="right:267.10px;top:865.28px;font-size:11.6px;line-height:11.6px;color:#433b4a;font-weight:bold;-webkit-text-stroke:0;letter-spacing:-0.1px;">APDEX</div>
<div class="t" style="right:155.10px;top:865.28px;font-size:11.6px;line-height:11.6px;color:#433b4a;font-weight:bold;-webkit-text-stroke:0;letter-spacing:-0.1px;">UNIQUE USERS</div>
<div class="t" style="right:54.60px;top:865.28px;font-size:11.6px;line-height:11.6px;color:#433b4a;font-weight:bold;-webkit-text-stroke:0;letter-spacing:-0.1px;">USER MISERY</div>
<svg class="abs" style="left:274px;top:904px" width="16" height="16" viewBox="0 0 16 16"><path d="M8 1 L10.1 5.4 L14.9 6 L11.4 9.3 L12.3 14.1 L8 11.8 L3.7 14.1 L4.6 9.3 L1.1 6 L5.9 5.4 Z" fill="#f5b325" stroke="#f5b325" stroke-width="1" stroke-linejoin="round"/></svg>
<div class="t" style="left:305.8px;top:907.13px;font-size:14.5px;line-height:14.5px;color:#4064b8;letter-spacing:1.0px;">/product/details</div>
<div class="abs" style="left:677.5px;top:905px;width:15px;height:15px;background:#f1d624"><div class="t" style="left:4px;top:6px;font-size:8.5px;font-weight:bold;color:#2a2a28;line-height:9px;letter-spacing:-0.2px">JS</div></div>
<div class="t" style="left:700.8px;top:907.13px;font-size:14.5px;line-height:14.5px;color:#2b2233;letter-spacing:0.55px;">PlantMood</div>
<div class="t" style="right:595.40px;top:907.13px;font-size:14.5px;line-height:14.5px;color:#2b2233;letter-spacing:0.1px;">130</div>
<div class="t" style="right:508.30px;top:907.13px;font-size:14.5px;line-height:14.5px;color:#2b2233;letter-spacing:0.7px;">130ms</div>
<div class="t" style="right:432.60px;top:907.13px;font-size:14.5px;line-height:14.5px;color:#2b2233;letter-spacing:0.9px;">540ms</div>
<div class="t" style="right:330.80px;top:907.13px;font-size:14.5px;line-height:14.5px;color:#2b2233;letter-spacing:0.2px;">0.33%</div>
<div class="t" style="right:266.80px;top:907.13px;font-size:14.5px;line-height:14.5px;color:#2b2233;letter-spacing:0.2px;">0.92</div>
<div class="t" style="right:180.20px;top:907.13px;font-size:14.5px;line-height:14.5px;color:#2b2233;letter-spacing:0.3px;">452</div>
<svg class="abs" style="left:1269px;top:906.0px" width="18" height="16" viewBox="0 0 18 16" fill="none" stroke="#1f1a24" stroke-width="1.5"><ellipse cx="9" cy="5.2" rx="3.7" ry="4.4"/><path d="M1.8 15 V12.8 A3.3 3.3 0 0 1 5.1 9.5 H12.9 A3.3 3.3 0 0 1 16.2 12.8 V15 Z" stroke-linejoin="round"/></svg>
<div class="abs" style="left:1309px;top:904.0px;width:5px;height:20px;background:#444674"></div><div class="abs" style="left:1317px;top:904.0px;width:5px;height:20px;background:#444674"></div><div class="abs" style="left:1325px;top:904.0px;width:5px;height:20px;background:#444674"></div><div class="abs" style="left:1333px;top:904.0px;width:5px;height:20px;background:#444674"></div><div class="abs" style="left:1341px;top:904.0px;width:5px;height:20px;background:#444674"></div><div class="abs" style="left:1349px;top:904.0px;width:5px;height:20px;background:#444674"></div><div class="abs" style="left:1357px;top:904.0px;width:5px;height:20px;background:#444674"></div><div class="abs" style="left:1365px;top:904.0px;width:5px;height:20px;background:#444674"></div><div class="abs" style="left:1373px;top:904.0px;width:5px;height:20px;background:#efedf1"></div><div class="abs" style="left:1381px;top:904.0px;width:5px;height:20px;background:#efedf1"></div>
<div class="abs" style="left:255px;top:934.0px;width:1148px;height:1px;background:#dad8dd"></div>
<svg class="abs" style="left:274px;top:945px" width="16" height="16" viewBox="0 0 16 16"><path d="M8 1 L10.1 5.4 L14.9 6 L11.4 9.3 L12.3 14.1 L8 11.8 L3.7 14.1 L4.6 9.3 L1.1 6 L5.9 5.4 Z" fill="#f5b325" stroke="#f5b325" stroke-width="1" stroke-linejoin="round"/></svg>
<div class="t" style="left:305.8px;top:948.13px;font-size:14.5px;line-height:14.5px;color:#4064b8;letter-spacing:1.0px;">/product/list</div>
<div class="abs" style="left:677.5px;top:946px;width:15px;height:15px;background:#f1d624"><div class="t" style="left:4px;top:6px;font-size:8.5px;font-weight:bold;color:#2a2a28;line-height:9px;letter-spacing:-0.2px">JS</div></div>
<div class="t" style="left:700.8px;top:948.13px;font-size:14.5px;line-height:14.5px;color:#2b2233;letter-spacing:0.55px;">PlantMood</div>
<div class="t" style="right:595.40px;top:948.13px;font-size:14.5px;line-height:14.5px;color:#2b2233;letter-spacing:0.1px;">154</div>
<div class="t" style="right:508.30px;top:948.13px;font-size:14.5px;line-height:14.5px;color:#2b2233;letter-spacing:0.7px;">154ms</div>
<div class="t" style="right:432.60px;top:948.13px;font-size:14.5px;line-height:14.5px;color:#2b2233;letter-spacing:0.9px;">556ms</div>
<div class="t" style="right:330.80px;top:948.13px;font-size:14.5px;line-height:14.5px;color:#2b2233;letter-spacing:0.2px;">5.33%</div>
<div class="t" style="right:266.80px;top:948.13px;font-size:14.5px;line-height:14.5px;color:#2b2233;letter-spacing:0.2px;">0.83</div>
<div class="t" style="right:180.20px;top:948.13px;font-size:14.5px;line-height:14.5px;color:#2b2233;letter-spacing:0.3px;">245</div>
<svg class="abs" style="left:1269px;top:947.0px" width="18" height="16" viewBox="0 0 18 16" fill="none" stroke="#1f1a24" stroke-width="1.5"><ellipse cx="9" cy="5.2" rx="3.7" ry="4.4"/><path d="M1.8 15 V12.8 A3.3 3.3 0 0 1 5.1 9.5 H12.9 A3.3 3.3 0 0 1 16.2 12.8 V15 Z" stroke-linejoin="round"/></svg>
<div class="abs" style="left:1309px;top:945.0px;width:5px;height:20px;background:#444674"></div><div class="abs" style="left:1317px;top:945.0px;width:5px;height:20px;background:#444674"></div><div class="abs" style="left:1325px;top:945.0px;width:5px;height:20px;background:#444674"></div><div class="abs" style="left:1333px;top:945.0px;width:5px;height:20px;background:#444674"></div><div class="abs" style="left:1341px;top:945.0px;width:5px;height:20px;background:#444674"></div><div class="abs" style="left:1349px;top:945.0px;width:5px;height:20px;background:#444674"></div><div class="abs" style="left:1357px;top:945.0px;width:5px;height:20px;background:#444674"></div><div class="abs" style="left:1365px;top:945.0px;width:5px;height:20px;background:#444674"></div><div class="abs" style="left:1373px;top:945.0px;width:5px;height:20px;background:#444674"></div><div class="abs" style="left:1381px;top:945.0px;width:5px;height:20px;background:#444674"></div>
<div class="abs" style="left:255px;top:975.0px;width:1148px;height:1px;background:#dad8dd"></div>
<svg class="abs" style="left:274px;top:986px" width="16" height="16" viewBox="0 0 16 16"><path d="M8 1 L10.1 5.4 L14.9 6 L11.4 9.3 L12.3 14.1 L8 11.8 L3.7 14.1 L4.6 9.3 L1.1 6 L5.9 5.4 Z" fill="#f5b325" stroke="#f5b325" stroke-width="1" stroke-linejoin="round"/></svg>
<div class="t" style="left:305.8px;top:989.13px;font-size:14.5px;line-height:14.5px;color:#4064b8;letter-spacing:1.0px;">/store/api_view_events</div>
<svg class="abs" style="left:677.5px;top:987px" width="16" height="16" viewBox="0 0 16 16"><path d="M7.9 0.5 C4.5 0.5 4.7 2 4.7 2 V3.6 H8 V4.1 H3.3 C3.3 4.1 0.9 3.8 0.9 7.6 C0.9 11.4 3 11.2 3 11.2 H4.3 V9.4 C4.3 9.4 4.2 7.3 6.4 7.3 H9.9 C9.9 7.3 11.9 7.3 11.9 5.4 V2.3 C11.9 2.3 12.2 0.5 7.9 0.5 Z" fill="#3e77b0"/><path d="M8.1 15.5 C11.5 15.5 11.3 14 11.3 14 V12.4 H8 V11.9 H12.7 C12.7 11.9 15.1 12.2 15.1 8.4 C15.1 4.6 13 4.8 13 4.8 H11.7 V6.6 C11.7 6.6 11.8 8.7 9.6 8.7 H6.1 C6.1 8.7 4.1 8.7 4.1 10.6 V13.7 C4.1 13.7 3.8 15.5 8.1 15.5 Z" fill="#f5c932"/></svg>
<div class="t" style="left:700.8px;top:989.13px;font-size:14.5px;line-height:14.5px;color:#2b2233;letter-spacing:0.55px;">Palmatum</div>
<div class="t" style="right:595.40px;top:989.13px;font-size:14.5px;line-height:14.5px;color:#2b2233;letter-spacing:0.1px;">177</div>
<div class="t" style="right:508.30px;top:989.13px;font-size:14.5px;line-height:14.5px;color:#2b2233;letter-spacing:0.7px;">177ms</div>
<div class="t" style="right:432.60px;top:989.13px;font-size:14.5px;line-height:14.5px;color:#2b2233;letter-spacing:0.9px;">561ms</div>
<div class="t" style="right:330.80px;top:989.13px;font-size:14.5px;line-height:14.5px;color:#2b2233;letter-spacing:0.2px;">1.43%</div>
<div class="t" style="right:266.80px;top:989.13px;font-size:14.5px;line-height:14.5px;color:#2b2233;letter-spacing:0.2px;">0.73</div>
<div class="t" style="right:180.20px;top:989.13px;font-size:14.5px;line-height:14.5px;color:#2b2233;letter-spacing:0.3px;">235</div>
<svg class="abs" style="left:1269px;top:988.0px" width="18" height="16" viewBox="0 0 18 16" fill="none" stroke="#1f1a24" stroke-width="1.5"><ellipse cx="9" cy="5.2" rx="3.7" ry="4.4"/><path d="M1.8 15 V12.8 A3.3 3.3 0 0 1 5.1 9.5 H12.9 A3.3 3.3 0 0 1 16.2 12.8 V15 Z" stroke-linejoin="round"/></svg>
<div class="abs" style="left:1309px;top:986.0px;width:5px;height:20px;background:#444674"></div><div class="abs" style="left:1317px;top:986.0px;width:5px;height:20px;background:#444674"></div><div class="abs" style="left:1325px;top:986.0px;width:5px;height:20px;background:#444674"></div><div class="abs" style="left:1333px;top:986.0px;width:5px;height:20px;background:#efedf1"></div><div class="abs" style="left:1341px;top:986.0px;width:5px;height:20px;background:#efedf1"></div><div class="abs" style="left:1349px;top:986.0px;width:5px;height:20px;background:#efedf1"></div><div class="abs" style="left:1357px;top:986.0px;width:5px;height:20px;background:#efedf1"></div><div class="abs" style="left:1365px;top:986.0px;width:5px;height:20px;background:#efedf1"></div><div class="abs" style="left:1373px;top:986.0px;width:5px;height:20px;background:#efedf1"></div><div class="abs" style="left:1381px;top:986.0px;width:5px;height:20px;background:#efedf1"></div>
<div class="abs" style="left:255px;top:1016.0px;width:1148px;height:1px;background:#dad8dd"></div>
<svg class="abs" style="left:274px;top:1027px" width="16" height="16" viewBox="0 0 16 16"><path d="M8 1.5 L10 5.7 L14.5 6.2 L11.1 9.3 L12 13.8 L8 11.6 L4 13.8 L4.9 9.3 L1.5 6.2 L6 5.7 Z" fill="none" stroke="#c6c0cc" stroke-width="1.1" stroke-linejoin="round"/></svg>
<div class="t" style="left:305.8px;top:1030.13px;font-size:14.5px;line-height:14.5px;color:#4064b8;letter-spacing:1.0px;">/empowerplant/login_page</div>
<svg class="abs" style="left:677.5px;top:1028px" width="16" height="16" viewBox="0 0 16 16"><path d="M0.5 1.5 H3.5 L8 9.3 L12.5 1.5 H15.5 L8 14.5 Z" fill="#41b883"/><path d="M3.5 1.5 H6 L8 5 L10 1.5 H12.5 L8 9.3 Z" fill="#35495e"/></svg>
<div class="t" style="left:700.8px;top:1030.13px;font-size:14.5px;line-height:14.5px;color:#2b2233;letter-spacing:0.55px;">Chamise</div>
<div class="t" style="right:595.40px;top:1030.13px;font-size:14.5px;line-height:14.5px;color:#2b2233;letter-spacing:0.1px;">185</div>
<div class="t" style="right:508.30px;top:1030.13px;font-size:14.5px;line-height:14.5px;color:#2b2233;letter-spacing:0.7px;">185ms</div>
<div class="t" style="right:432.60px;top:1030.13px;font-size:14.5px;line-height:14.5px;color:#2b2233;letter-spacing:0.9px;">583ms</div>
<div class="t" style="right:330.80px;top:1030.13px;font-size:14.5px;line-height:14.5px;color:#2b2233;letter-spacing:0.2px;">2.23%</div>
<div class="t" style="right:266.80px;top:1030.13px;font-size:14.5px;line-height:14.5px;color:#2b2233;letter-spacing:0.2px;">0.62</div>
<div class="t" style="right:180.20px;top:1030.13px;font-size:14.5px;line-height:14.5px;color:#2b2233;letter-spacing:0.3px;">115</div>
<svg class="abs" style="left:1269px;top:1029.0px" width="18" height="16" viewBox="0 0 18 16" fill="none" stroke="#1f1a24" stroke-width="1.5"><ellipse cx="9" cy="5.2" rx="3.7" ry="4.4"/><path d="M1.8 15 V12.8 A3.3 3.3 0 0 1 5.1 9.5 H12.9 A3.3 3.3 0 0 1 16.2 12.8 V15 Z" stroke-linejoin="round"/></svg>
<div class="abs" style="left:1309px;top:1027.0px;width:5px;height:20px;background:#444674"></div><div class="abs" style="left:1317px;top:1027.0px;width:5px;height:20px;background:#444674"></div><div class="abs" style="left:1325px;top:1027.0px;width:5px;height:20px;background:#444674"></div><div class="abs" style="left:1333px;top:1027.0px;width:5px;height:20px;background:#444674"></div><div class="abs" style="left:1341px;top:1027.0px;width:5px;height:20px;background:#444674"></div><div class="abs" style="left:1349px;top:1027.0px;width:5px;height:20px;background:#444674"></div><div class="abs" style="left:1357px;top:1027.0px;width:5px;height:20px;background:#efedf1"></div><div class="abs" style="left:1365px;top:1027.0px;width:5px;height:20px;background:#efedf1"></div><div class="abs" style="left:1373px;top:1027.0px;width:5px;height:20px;background:#efedf1"></div><div class="abs" style="left:1381px;top:1027.0px;width:5px;height:20px;background:#efedf1"></div>
<div class="abs" style="left:255px;top:1057.0px;width:1148px;height:1px;background:#dad8dd"></div>
<svg class="abs" style="left:274px;top:1068px" width="16" height="16" viewBox="0 0 16 16"><path d="M8 1.5 L10 5.7 L14.5 6.2 L11.1 9.3 L12 13.8 L8 11.6 L4 13.8 L4.9 9.3 L1.5 6.2 L6 5.7 Z" fill="none" stroke="#c6c0cc" stroke-width="1.1" stroke-linejoin="round"/></svg>
<div class="t" style="left:305.8px;top:1071.13px;font-size:14.5px;line-height:14.5px;color:#4064b8;letter-spacing:1.0px;">/docs/empowerplant/home</div>
<svg class="abs" style="left:677.5px;top:1069px" width="16" height="16" viewBox="0 0 16 16"><rect width="16" height="16" fill="#1d2b3a"/><g fill="none" stroke="#5ed3f3" stroke-width="0.9"><ellipse cx="8" cy="8" rx="6" ry="2.3"/><ellipse cx="8" cy="8" rx="6" ry="2.3" transform="rotate(60 8 8)"/><ellipse cx="8" cy="8" rx="6" ry="2.3" transform="rotate(120 8 8)"/></g><circle cx="8" cy="8" r="1.1" fill="#5ed3f3"/></svg>
<div class="t" style="left:700.8px;top:1071.13px;font-size:14.5px;line-height:14.5px;color:#2b2233;letter-spacing:0.55px;">Elderberry</div>
<div class="t" style="right:595.40px;top:1071.13px;font-size:14.5px;line-height:14.5px;color:#2b2233;letter-spacing:0.1px;">196</div>
<div class="t" style="right:508.30px;top:1071.13px;font-size:14.5px;line-height:14.5px;color:#2b2233;letter-spacing:0.7px;">196ms</div>
<div class="t" style="right:432.60px;top:1071.13px;font-size:14.5px;line-height:14.5px;color:#2b2233;letter-spacing:0.9px;">600ms</div>
<div class="t" style="right:330.80px;top:1071.13px;font-size:14.5px;line-height:14.5px;color:#2b2233;letter-spacing:0.2px;">0.93%</div>
<div class="t" style="right:266.80px;top:1071.13px;font-size:14.5px;line-height:14.5px;color:#2b2233;letter-spacing:0.2px;">0.81</div>
<div class="t" style="right:180.20px;top:1071.13px;font-size:14.5px;line-height:14.5px;color:#2b2233;letter-spacing:0.3px;">42</div>
<svg class="abs" style="left:1269px;top:1070.0px" width="18" height="16" viewBox="0 0 18 16" fill="none" stroke="#1f1a24" stroke-width="1.5"><ellipse cx="9" cy="5.2" rx="3.7" ry="4.4"/><path d="M1.8 15 V12.8 A3.3 3.3 0 0 1 5.1 9.5 H12.9 A3.3 3.3 0 0 1 16.2 12.8 V15 Z" stroke-linejoin="round"/></svg>
<div class="abs" style="left:1309px;top:1068.0px;width:5px;height:20px;background:#444674"></div><div class="abs" style="left:1317px;top:1068.0px;width:5px;height:20px;background:#444674"></div><div class="abs" style="left:1325px;top:1068.0px;width:5px;height:20px;background:#444674"></div><div class="abs" style="left:1333px;top:1068.0px;width:5px;height:20px;background:#444674"></div><div class="abs" style="left:1341px;top:1068.0px;width:5px;height:20px;background:#efedf1"></div><div class="abs" style="left:1349px;top:1068.0px;width:5px;height:20px;background:#efedf1"></div><div class="abs" style="left:1357px;top:1068.0px;width:5px;height:20px;background:#efedf1"></div><div class="abs" style="left:1365px;top:1068.0px;width:5px;height:20px;background:#efedf1"></div><div class="abs" style="left:1373px;top:1068.0px;width:5px;height:20px;background:#efedf1"></div><div class="abs" style="left:1381px;top:1068.0px;width:5px;height:20px;background:#efedf1"></div>
<div class="abs" style="left:255px;top:1098.0px;width:1148px;height:1px;background:#dad8dd"></div>
<svg class="abs" style="left:274px;top:1109px" width="16" height="16" viewBox="0 0 16 16"><path d="M8 1.5 L10 5.7 L14.5 6.2 L11.1 9.3 L12 13.8 L8 11.6 L4 13.8 L4.9 9.3 L1.5 6.2 L6 5.7 Z" fill="none" stroke="#c6c0cc" stroke-width="1.1" stroke-linejoin="round"/></svg>
<div class="t" style="left:305.8px;top:1112.13px;font-size:14.5px;line-height:14.5px;color:#4064b8;letter-spacing:1.0px;">pytest.http</div>
<svg class="abs" style="left:677.5px;top:1110px" width="16" height="16" viewBox="0 0 16 16" fill="none" stroke="#1d1a20" stroke-width="1.7" stroke-linecap="round"><path d="M7.5 12 L3 2.5 M8 12 L8.5 1.5 M8.5 12 L14.5 6.5 M7 12.5 L1 10.5"/><ellipse cx="8" cy="12.3" rx="3.2" ry="2.2" fill="#1d1a20" stroke="none"/></svg>
<div class="t" style="left:700.8px;top:1112.13px;font-size:14.5px;line-height:14.5px;color:#2b2233;letter-spacing:0.55px;">Dicentra</div>
<div class="t" style="right:595.40px;top:1112.13px;font-size:14.5px;line-height:14.5px;color:#2b2233;letter-spacing:0.1px;">274</div>
<div class="t" style="right:508.30px;top:1112.13px;font-size:14.5px;line-height:14.5px;color:#2b2233;letter-spacing:0.7px;">274ms</div>
<div class="t" style="right:432.60px;top:1112.13px;font-size:14.5px;line-height:14.5px;color:#2b2233;letter-spacing:0.9px;">647ms</div>
<div class="t" style="right:330.80px;top:1112.13px;font-size:14.5px;line-height:14.5px;color:#2b2233;letter-spacing:0.2px;">0.33%</div>
<div class="t" style="right:266.80px;top:1112.13px;font-size:14.5px;line-height:14.5px;color:#2b2233;letter-spacing:0.2px;">0.88</div>
<div class="t" style="right:180.20px;top:1112.13px;font-size:14.5px;line-height:14.5px;color:#2b2233;letter-spacing:0.3px;">35</div>
<svg class="abs" style="left:1269px;top:1111.0px" width="18" height="16" viewBox="0 0 18 16" fill="none" stroke="#1f1a24" stroke-width="1.5"><ellipse cx="9" cy="5.2" rx="3.7" ry="4.4"/><path d="M1.8 15 V12.8 A3.3 3.3 0 0 1 5.1 9.5 H12.9 A3.3 3.3 0 0 1 16.2 12.8 V15 Z" stroke-linejoin="round"/></svg>
<div class="abs" style="left:1309px;top:1109.0px;width:5px;height:20px;background:#444674"></div><div class="abs" style="left:1317px;top:1109.0px;width:5px;height:20px;background:#efedf1"></div><div class="abs" style="left:1325px;top:1109.0px;width:5px;height:20px;background:#efedf1"></div><div class="abs" style="left:1333px;top:1109.0px;width:5px;height:20px;background:#efedf1"></div><div class="abs" style="left:1341px;top:1109.0px;width:5px;height:20px;background:#efedf1"></div><div class="abs" style="left:1349px;top:1109.0px;width:5px;height:20px;background:#efedf1"></div><div class="abs" style="left:1357px;top:1109.0px;width:5px;height:20px;background:#efedf1"></div><div class="abs" style="left:1365px;top:1109.0px;width:5px;height:20px;background:#efedf1"></div><div class="abs" style="left:1373px;top:1109.0px;width:5px;height:20px;background:#efedf1"></div><div class="abs" style="left:1381px;top:1109.0px;width:5px;height:20px;background:#efedf1"></div>
<div class="abs" style="left:255px;top:1139.0px;width:1148px;height:1px;background:#dad8dd"></div>
<svg class="abs" style="left:274px;top:1150px" width="16" height="16" viewBox="0 0 16 16"><path d="M8 1.5 L10 5.7 L14.5 6.2 L11.1 9.3 L12 13.8 L8 11.6 L4 13.8 L4.9 9.3 L1.5 6.2 L6 5.7 Z" fill="none" stroke="#c6c0cc" stroke-width="1.1" stroke-linejoin="round"/></svg>
<div class="t" style="left:305.8px;top:1153.13px;font-size:14.5px;line-height:14.5px;color:#4064b8;letter-spacing:1.0px;">/empowerplant_tests/api</div>
<svg class="abs" style="left:677.5px;top:1151px" width="16" height="16" viewBox="0 0 16 16" fill="none" stroke="#1d1a20" stroke-width="1.7" stroke-linecap="round"><path d="M7.5 12 L3 2.5 M8 12 L8.5 1.5 M8.5 12 L14.5 6.5 M7 12.5 L1 10.5"/><ellipse cx="8" cy="12.3" rx="3.2" ry="2.2" fill="#1d1a20" stroke="none"/></svg>
<div class="t" style="left:700.8px;top:1153.13px;font-size:14.5px;line-height:14.5px;color:#2b2233;letter-spacing:0.55px;">Dicentra</div>
<div class="t" style="right:595.40px;top:1153.13px;font-size:14.5px;line-height:14.5px;color:#2b2233;letter-spacing:0.1px;">357</div>
<div class="t" style="right:508.30px;top:1153.13px;font-size:14.5px;line-height:14.5px;color:#2b2233;letter-spacing:0.7px;">357ms</div>
<div class="t" style="right:432.60px;top:1153.13px;font-size:14.5px;line-height:14.5px;color:#2b2233;letter-spacing:0.9px;">703ms</div>
<div class="t" style="right:330.80px;top:1153.13px;font-size:14.5px;line-height:14.5px;color:#2b2233;letter-spacing:0.2px;">1.23%</div>
<div class="t" style="right:266.80px;top:1153.13px;font-size:14.5px;line-height:14.5px;color:#2b2233;letter-spacing:0.2px;">0.91</div>
<div class="t" style="right:180.20px;top:1153.13px;font-size:14.5px;line-height:14.5px;color:#2b2233;letter-spacing:0.3px;">12</div>
<svg class="abs" style="left:1269px;top:1152.0px" width="18" height="16" viewBox="0 0 18 16" fill="none" stroke="#1f1a24" stroke-width="1.5"><ellipse cx="9" cy="5.2" rx="3.7" ry="4.4"/><path d="M1.8 15 V12.8 A3.3 3.3 0 0 1 5.1 9.5 H12.9 A3.3 3.3 0 0 1 16.2 12.8 V15 Z" stroke-linejoin="round"/></svg>
<div class="abs" style="left:1309px;top:1150.0px;width:5px;height:20px;background:#efedf1"></div><div class="abs" style="left:1317px;top:1150.0px;width:5px;height:20px;background:#efedf1"></div><div class="abs" style="left:1325px;top:1150.0px;width:5px;height:20px;background:#efedf1"></div><div class="abs" style="left:1333px;top:1150.0px;width:5px;height:20px;background:#efedf1"></div><div class="abs" style="left:1341px;top:1150.0px;width:5px;height:20px;background:#efedf1"></div><div class="abs" style="left:1349px;top:1150.0px;width:5px;height:20px;background:#efedf1"></div><div class="abs" style="left:1357px;top:1150.0px;width:5px;height:20px;background:#efedf1"></div><div class="abs" style="left:1365px;top:1150.0px;width:5px;height:20px;background:#efedf1"></div><div class="abs" style="left:1373px;top:1150.0px;width:5px;height:20px;background:#efedf1"></div><div class="abs" style="left:1381px;top:1150.0px;width:5px;height:20px;background:#efedf1"></div>
<div class="abs" style="left:1324px;top:1198px;width:80px;height:30px;border:1px solid #d3d0d7;border-radius:4px;background:#fff;overflow:hidden;box-shadow:0 2px 0 rgba(0,0,0,0.04)">
<div class="abs" style="left:0;top:0;width:39px;height:28px;background:#f6f6f7"></div>
<div class="abs" style="left:39px;top:0;width:1px;height:28px;background:#d3d0d7"></div>
<svg class="abs" style="left:13px;top:6.5px" width="14" height="16" viewBox="0 0 14 16" fill="none" stroke="#4a4550" stroke-width="1.3"><path d="M10 1 L3.6 7.5 L10 14"/></svg>
<svg class="abs" style="left:53px;top:6.5px" width="14" height="16" viewBox="0 0 14 16" fill="none" stroke="#2b2233" stroke-width="1.4"><path d="M4 1 L10.4 7.5 L4 14"/></svg>
</div>
</body></html>
